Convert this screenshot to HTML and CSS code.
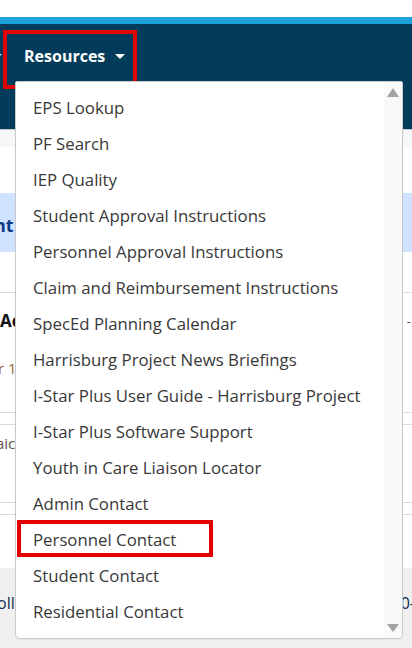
FILE: index.html
```html
<!DOCTYPE html>
<html lang="en">
<head>
<meta charset="utf-8">
<title>Resources menu</title>
<link rel="stylesheet" href="styles.css">
</head>
<body>
<div class="page">
  <div class="topgap"></div>
  <div class="accent"></div>
  <nav class="navbar">
    <span class="prev-caret"></span>
    <a class="nav-link" href="#">Resources <span class="caret"></span></a>
  </nav>
  <div class="subbar"></div>
  <div class="spacer"></div>
  <div class="alert"><strong>nt</strong></div>
  <div class="gap"></div>
  <div class="row row-a">
    <div class="row-a-top"><strong class="title">Ac</strong><span class="dash">-</span></div>
    <div class="meta">r 1</div>
  </div>
  <div class="row row-thin"></div>
  <div class="row row-b"><span class="paid">aic</span></div>
  <div class="row row-thin2"></div>
  <div class="white-fill"></div>
  <div class="footer-band"><span class="roll">oll</span><span class="num">0-</span></div>
</div>

<div class="dropdown">
  <ul class="menu">
    <li>EPS Lookup</li>
    <li>PF Search</li>
    <li>IEP Quality</li>
    <li>Student Approval Instructions</li>
    <li>Personnel Approval Instructions</li>
    <li>Claim and Reimbursement Instructions</li>
    <li>SpecEd Planning Calendar</li>
    <li>Harrisburg Project News Briefings</li>
    <li>I-Star Plus User Guide - Harrisburg Project</li>
    <li>I-Star Plus Software Support</li>
    <li>Youth in Care Liaison Locator</li>
    <li>Admin Contact</li>
    <li class="marked">Personnel Contact<span class="mark-box"></span></li>
    <li>Student Contact</li>
    <li>Residential Contact</li>
  </ul>
  <div class="scrollbar">
    <span class="arrow up"></span>
    <span class="arrow down"></span>
  </div>
</div>
</body>
</html>
```

FILE: styles.css
```css
* { box-sizing: border-box; }
html, body { margin: 0; padding: 0; }
body {
  font-family: "Open Sans", "Noto Sans", sans-serif;
  background: #fff;
  width: 412px;
  height: 648px;
  overflow: hidden;
  position: relative;
}
.page { display: flex; flex-direction: column; }
.topgap { height: 17px; background: #fff; }
.accent { height: 7px; background: #1ea2dc; }
.navbar {
  height: 106px;
  background: #023c5a;
  display: flex;
  align-items: flex-start;
  padding-top: 6px;
  padding-left: 3px;
  border-bottom: 1px solid #c4c8cc;
}
.prev-caret {
  width: 0; height: 0;
  border-top: 5px solid #cfd8de;
  border-left: 5px solid transparent;
  border-right: 5px solid transparent;
  margin-left: -11px;
  margin-right: 1px;
  margin-top: 24px;
}
.nav-link {
  width: 134px;
  height: 59px;
  border: 4px solid #e30000;
  color: #fff;
  text-decoration: none;
  font-weight: 700;
  font-size: 16px;
  line-height: 20px;
  padding: 12px 0 0 17px;
  display: flex;
  align-items: flex-start;
  white-space: nowrap;
}
.caret {
  display: inline-block;
  width: 0; height: 0;
  border-top: 5px solid #fff;
  border-left: 5px solid transparent;
  border-right: 5px solid transparent;
  margin-left: 10px;
  margin-top: 8px;
}
.subbar { height: 17px; background: #f6f7f9; }
.spacer { height: 46px; background: #fff; }
.alert {
  height: 59px;
  background: #cfe2ff;
  color: #0b3b86;
  font-size: 18px;
  line-height: 24px;
  padding-top: 20px;
  margin-left: -6px;
}
.gap { height: 41px; border-bottom: 1px solid #d9dcdf; }
.row { border-bottom: 1px solid #d9dcdf; }
.row-a { height: 120px; padding-top: 16px; }
.row-a-top { display: flex; justify-content: space-between; align-items: flex-start; }
.title { font-size: 17px; line-height: 24px; color: #111; }
.dash { color: #8e3b2e; font-size: 13px; line-height: 24px; margin-right: 1px; }
.meta { font-size: 15px; line-height: 24px; color: #9a6a3a; margin-top: 23px; margin-left: -2px; }
.row-thin { height: 12px; }
.row-b { height: 78px; padding-top: 6px; font-size: 15px; line-height: 24px; color: #5b524a; }
.paid { margin-left: -4px; }
.row-thin2 { height: 12px; }
.white-fill { height: 53px; }
.footer-band {
  height: 80px;
  background: #f0f0f0;
  display: flex;
  justify-content: space-between;
  padding-top: 23px;
  font-size: 16px;
  line-height: 24px;
  color: #122a4c;
}
.roll { margin-left: -3px; }
.num { margin-right: -3px; }

.dropdown {
  position: absolute;
  left: 15px;
  top: 81px;
  width: 388px;
  height: 558px;
  background: #fff;
  border: 1px solid #c9c9c9;
  border-radius: 2px 2px 5px 5px;
  display: flex;
  box-shadow: 0 1px 2px rgba(0,0,0,0.05);
}
.menu {
  list-style: none;
  margin: 0;
  padding: 8px 0 0 0;
  flex: 1;
  font-size: 16.8px;
  color: #383838;
}
.menu li {
  height: 36px;
  line-height: 36px;
  padding-left: 17px;
  white-space: nowrap;
  position: relative;
}
.mark-box {
  position: absolute;
  left: 1px;
  top: -2px;
  width: 196px;
  height: 37px;
  border: 4px solid #e30000;
}
.scrollbar {
  width: 18px;
  background: #f9f9f9;
  position: relative;
  border-radius: 0 0 4px 0;
}
.arrow {
  position: absolute;
  left: 3px;
  width: 0; height: 0;
  border-left: 6px solid transparent;
  border-right: 6px solid transparent;
}
.arrow.up { top: 6px; border-bottom: 9px solid #a3a3a3; }
.arrow.down { bottom: 6px; border-top: 8px solid #a3a3a3; }
```
